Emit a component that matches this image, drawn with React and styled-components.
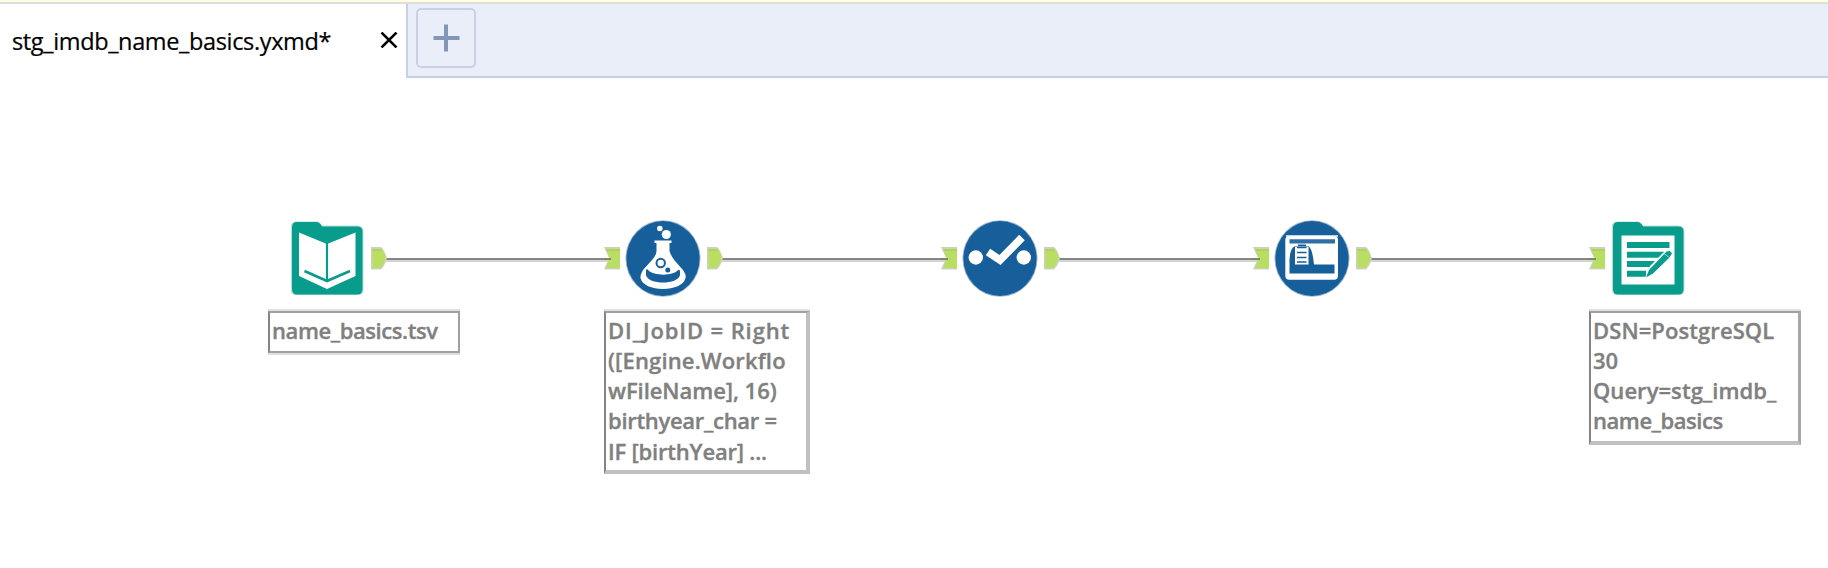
import React from "react";
import styled, { createGlobalStyle } from "styled-components";

const Global = createGlobalStyle`
  body { margin: 0; background: #fff; overflow: hidden; }
  * { box-sizing: border-box; }
`;

const Window = styled.div`
  display: flex;
  flex-direction: column;
  width: 1828px;
  height: 568px;
  background: #fff;
  font-family: "Open Sans", "Noto Sans", sans-serif;
`;

const TopEdge = styled.div`
  height: 4px;
  flex: none;
  background: #ffffe1;
  border-bottom: 2px solid #dedede;
`;

const TabBar = styled.div`
  display: flex;
  height: 74px;
  flex: none;
`;

const Tab = styled.div`
  display: flex;
  align-items: center;
  justify-content: space-between;
  width: 406px;
  padding: 0 8px 0 12px;
  background: #fff;
`;

const TabTitle = styled.span`
  font-size: 23.5px;
  line-height: 32px;
  letter-spacing: -0.36px;
  color: #000;
  -webkit-text-stroke: 0.2px #000;
  white-space: nowrap;
`;

const CloseIcon = styled.svg`
  display: block;
  width: 18px;
  height: 16px;
  margin-bottom: 2px;
`;

const Strip = styled.div`
  flex: 1;
  padding: 4px 8px;
  background: #eaeef9;
  border-left: 2px solid #c5d0e6;
  border-bottom: 2px solid #c5d0e6;
`;

const AddTab = styled.button`
  display: block;
  width: 60px;
  height: 60px;
  padding: 0;
  background: #eaeef9;
  border: 2px solid #c7d2e8;
  border-radius: 5px;
`;

const PlusIcon = styled.svg`
  display: block;
  width: 56px;
  height: 56px;
`;

const Canvas = styled.div`
  position: relative;
  flex: 1;
`;

const Node = styled.div`
  position: absolute;
  left: ${(p) => p.$x}px;
  top: 140px;
  display: flex;
  flex-direction: column;
  align-items: flex-start;
  gap: 13px;
`;

const NodeRow = styled.div`
  display: flex;
  align-items: center;
  gap: ${(p) => p.$gap}px;
  padding-left: ${(p) => p.$indent}px;
`;

const Tool = styled.svg`
  display: block;
  width: 80px;
  height: 80px;
`;

const Anchor = styled.svg`
  display: block;
  width: 16px;
  height: 24px;
  margin-left: ${(p) => (p.$out ? 1 : 0)}px;
`;

const Wire = styled.div`
  position: absolute;
  left: ${(p) => p.$from}px;
  width: ${(p) => p.$to - p.$from}px;
  top: 180px;
  height: 4px;
  background: #d4d4d4;
  border-top: 2px solid #858585;
`;

const NoteBox = styled.div`
  width: ${(p) => p.$w}px;
  height: ${(p) => p.$h}px;
  padding: 2px 0 0 2px;
  background: #fff;
  border-style: solid;
  border-width: 2px ${(p) => p.$right.width}px ${(p) => p.$bottom.width}px 2px;
  border-color: #a0a0a0 ${(p) => p.$right.color} ${(p) => p.$bottom.color} #858585;
  box-shadow: 0 -2px 0 #e0e0e0${(p) => (p.$shade ? ", 0 2px 0 #dedede" : "")};
`;

const NoteLine = styled.div`
  padding-top: ${(p) => p.$lead || 0}px;
  font-size: 22px;
  font-weight: 600;
  line-height: 30px;
  letter-spacing: ${(p) => p.$spacing}px;
  color: #808080;
  -webkit-text-stroke: 0.35px #808080;
  white-space: pre;
  font-variant-ligatures: none;
`;

const BLUE = "#175f9b";
const TEAL = "#079c8b";

function InAnchor() {
  return (
    <Anchor viewBox="0 0 16 24">
      <path d="M0 1H16V23.5H0L5 12Z" fill="#cbd3c0" />
      <path d="M2 3H16V22H2L6 12Z" fill="#bade63" />
      <path d="M2 3H16V5H3Z" fill="#add454" />
      <path d="M0 12H7V14H0Z" fill="#7c8a5a" />
      <path d="M0 14H4V16H0Z" fill="#d4d4d4" />
    </Anchor>
  );
}

function OutAnchor() {
  return (
    <Anchor $out viewBox="0 0 16 24">
      <path d="M0 1H10Q12 2 14 7L16 12Q14 20 10 23.5H0Z" fill="#cbd3c0" />
      <path d="M1.5 3H10Q13 6 15 12Q13 18 9 22H1.5Z" fill="#bade63" />
      <path d="M1.5 3H10L11 5H1.5Z" fill="#add454" />
    </Anchor>
  );
}

function Folder() {
  return (
    <>
      <path d="M6 3.500H28Q30 4 32 7.500H68Q73.500 8 73.500 13V72Q73.500 77 68 77H6Q1 77 1 72V9Q1 3.500 6 3.500Z" fill="#b9ddd7" />
      <path d="M7 4H27Q30 4.500 32 8.500H67Q72.500 8.500 72.500 13.500V71Q72.500 76.500 67 76.500H7Q2 76.500 2 71V9.500Q2 4 7 4Z" fill={TEAL} />
    </>
  );
}

function InputIcon() {
  return (
    <Tool viewBox="0 0 80 80">
      <Folder />
      <path d="M9 14.500L37 26L65.500 14.500V58L37 71L9 58Z" fill="#fff" />
      <path d="M37 25V63" stroke={TEAL} strokeWidth="2.200" />
      <path d="M14.500 53L37 63L60 53" stroke={TEAL} strokeWidth="2.700" fill="none" />
    </Tool>
  );
}

function OutputIcon() {
  return (
    <Tool viewBox="0 0 80 80">
      <Folder />
      <path d="M10.500 17.500H63.500V66.500H10.500Z" fill="#fff" />
      <path d="M16 27H58.500M16 36.700H53M16 46H44M16 55.800H35" stroke={TEAL} strokeWidth="6" />
      <path d="M33 62L39 48L54 33L61 29V38L45 58L36 62Z" fill="#fff" />
      <path d="M55.500 33.500L59 33L61 35.500L58 40L42 55.500L35 59.500L38 52Z" fill={TEAL} />
      <path d="M53 35.500L59 40" stroke="#b8ded9" strokeWidth=".8" />
    </Tool>
  );
}

function Disc() {
  return (
    <>
      <ellipse cx="40" cy="40.500" rx="37.500" ry="38.300" fill="#a4b5ce" />
      <ellipse cx="40" cy="40.500" rx="36.600" ry="37.400" fill={BLUE} />
    </>
  );
}

function FormulaIcon() {
  return (
    <Tool viewBox="0 0 80 80">
      <Disc />
      <circle cx="36.800" cy="10.500" r="2.800" fill="#fff" />
      <circle cx="43.300" cy="16.500" r="4.600" fill="#fff" />
      <path d="M31.500 22.500H48.500V25H46.500V33Q48 38 52 43L60 52Q63.500 57 62.500 60C61 67 51 71 40 71C29 71 19 67 17.500 60Q17 57 20 52L29 42Q33 38 33.500 33V25H31.500Z" fill="#fff" />
      <path d="M23 52Q24 50.500 25.500 52.500C31 58 50 58 54.500 52.500Q57 50.500 57 54V57C55 67 25 67 23 57Z" fill={BLUE} />
      <circle cx="37.700" cy="45" r="4.200" fill="#fff" stroke={BLUE} strokeWidth="2" />
      <circle cx="44.800" cy="52" r="3.800" fill="#fff" />
      <circle cx="44.800" cy="52" r="2.500" fill={BLUE} />
    </Tool>
  );
}

function SelectIcon() {
  return (
    <Tool viewBox="0 0 80 80">
      <Disc />
      <circle cx="15.800" cy="39.500" r="7.200" fill="#fff" />
      <circle cx="63.800" cy="39.500" r="7.200" fill="#fff" />
      <path d="M26.800 34L40 43L64 18" fill="none" stroke={BLUE} strokeWidth="11" />
      <path d="M28 34L40 42L62 19.500" fill="none" stroke="#fff" strokeWidth="7.800" />
    </Tool>
  );
}

function BrowseIcon() {
  return (
    <Tool viewBox="0 0 80 80">
      <Disc />
      <path d="M14 17H66V19H14Z" fill="#bfd2e3" />
      <rect x="13.300" y="18" width="52.700" height="43.800" rx="4" fill="#fff" />
      <path d="M17.500 21.300H63V25.500H17.500Z" fill="#2e6fa6" />
      <path d="M17.500 55.500V42C18 35 19 30 23 28H26V26.500H34V28H36C40 30 41 38 42 46.500H62.500V55.500Z" fill={BLUE} />
      <path d="M23 28.500H36.500V46.500H23Z" fill="#fff" />
      <path d="M25 29.500H34.500M25 34.500H34.500M25 39.500H34.500M25 44H34.500" stroke={BLUE} strokeWidth="1.700" />
    </Tool>
  );
}

const PLAIN_EDGE = { width: 2, color: "#a0a0a0" };
const SOFT_EDGE = { width: 4, color: "#c0c0c0" };

const wires = [
  { from: 386, to: 606 },
  { from: 722, to: 944 },
  { from: 1059, to: 1255 },
  { from: 1371, to: 1591 },
];

const nodes = [
  {
    x: 268,
    indent: 22,
    gap: 0,
    Icon: InputIcon,
    output: true,
    note: {
      w: 192, h: 42, right: PLAIN_EDGE, bottom: PLAIN_EDGE, shade: true,
      lines: [{ text: "name_basics.tsv", spacing: -0.42 }],
    },
  },
  {
    x: 604,
    gap: 3,
    Icon: FormulaIcon,
    input: true,
    output: true,
    note: {
      w: 206, h: 163, right: SOFT_EDGE, bottom: SOFT_EDGE,
      lines: [
        { text: "DI_JobID = Right", spacing: 0.9 },
        { text: "([Engine.Workflo", spacing: 0.15 },
        { text: "wFileName], 16)", spacing: -0.05 },
        { text: "birthyear_char =", spacing: -0.3 },
        { text: "IF [birthYear] ...", spacing: -0.2, lead: 1 },
      ],
    },
  },
  { x: 941, gap: 3, Icon: SelectIcon, input: true, output: true },
  { x: 1253, gap: 3, Icon: BrowseIcon, input: true, output: true },
  {
    x: 1589,
    gap: 6,
    Icon: OutputIcon,
    input: true,
    note: {
      w: 212, h: 134, right: { width: 3, color: "#a8a8a8" }, bottom: SOFT_EDGE,
      lines: [
        { text: "DSN=PostgreSQL", spacing: 0.08 },
        { text: "30", spacing: 0 },
        { text: "Query=stg_imdb_", spacing: 0.05 },
        { text: "name_basics", spacing: -0.45 },
      ],
    },
  },
];

function Note({ note }) {
  return (
    <NoteBox $w={note.w} $h={note.h} $right={note.right} $bottom={note.bottom} $shade={note.shade}>
      {note.lines.map((line) => (
        <NoteLine key={line.text} $spacing={line.spacing} $lead={line.lead}>
          {line.text}
        </NoteLine>
      ))}
    </NoteBox>
  );
}

function WorkflowNode({ x, indent = 0, gap, Icon, input, output, note }) {
  return (
    <Node $x={x}>
      <NodeRow $gap={gap} $indent={indent}>
        {input && <InAnchor />}
        <Icon />
        {output && <OutAnchor />}
      </NodeRow>
      {note && <Note note={note} />}
    </Node>
  );
}

export default function App() {
  return (
    <>
      <Global />
      <Window>
        <TopEdge />
        <TabBar>
          <Tab>
            <TabTitle>stg_imdb_name_basics.yxmd*</TabTitle>
            <CloseIcon viewBox="0 0 18 16">
              <path d="M1.500 .5L16.500 15.500M16.500 .5L1.500 15.500" stroke="#000" strokeWidth="2.500" />
            </CloseIcon>
          </Tab>
          <Strip>
            <AddTab aria-label="New tab">
              <PlusIcon viewBox="0 0 56 56">
                <path d="M28 14.500V41.500M15.500 28H41.500" stroke="#8496b5" strokeWidth="4" />
              </PlusIcon>
            </AddTab>
          </Strip>
        </TabBar>
        <Canvas>
          {wires.map((wire) => (
            <Wire key={wire.from} $from={wire.from} $to={wire.to} />
          ))}
          {nodes.map((node) => (
            <WorkflowNode key={node.x} {...node} />
          ))}
        </Canvas>
      </Window>
    </>
  );
}
